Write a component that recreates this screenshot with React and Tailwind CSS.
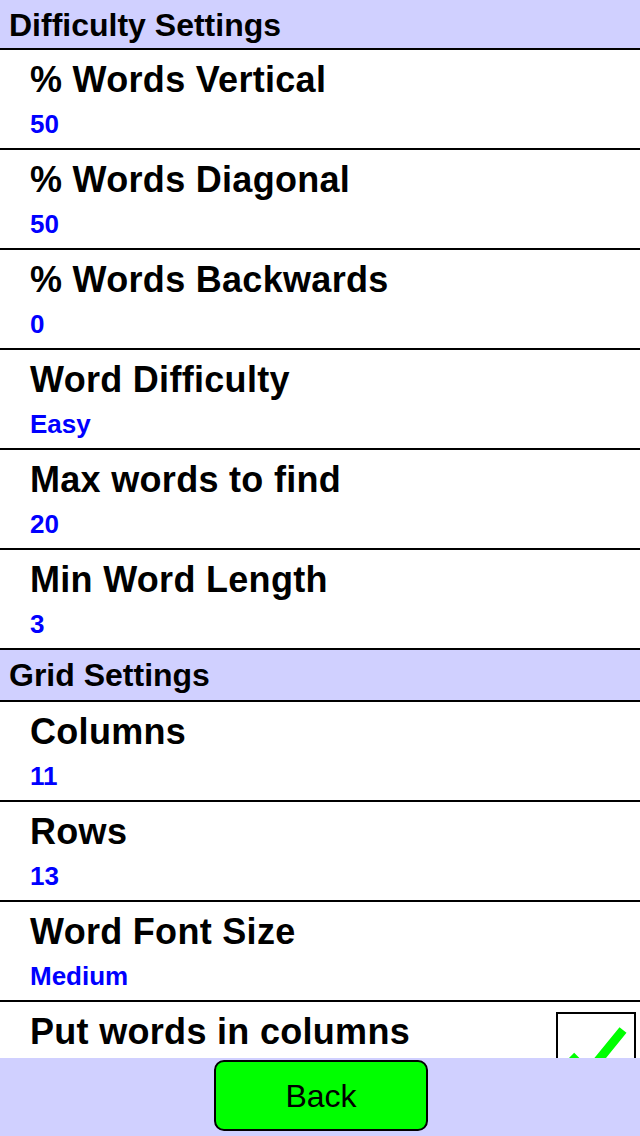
import { Fragment } from 'react';

const sections = [
  {
    title: 'Difficulty Settings',
    headerClass: 'h-[50px]',
    rows: [
      { label: '% Words Vertical', value: '50' },
      { label: '% Words Diagonal', value: '50' },
      { label: '% Words Backwards', value: '0' },
      { label: 'Word Difficulty', value: 'Easy' },
      { label: 'Max words to find', value: '20' },
      { label: 'Min Word Length', value: '3' },
    ],
  },
  {
    title: 'Grid Settings',
    headerClass: 'h-[52px]',
    rows: [
      { label: 'Columns', value: '11' },
      { label: 'Rows', value: '13' },
      { label: 'Word Font Size', value: 'Medium' },
      { label: 'Put words in columns', checkbox: true, checked: true },
    ],
  },
];

function CheckBox({ checked }) {
  return (
    <div className="w-[80px] h-[80px] shrink-0 border-2 border-black bg-white mt-[10px] mr-[4px]">
      {checked && (
        <svg width="76" height="76" viewBox="0 0 76 76">
          <path d="M13 42 L30 59 L65 16" fill="none" stroke="#00ff00" strokeWidth="9" />
        </svg>
      )}
    </div>
  );
}

function SettingRow({ row }) {
  return (
    <div className="h-[100px] shrink-0 border-b-2 border-black bg-white flex items-start justify-between">
      <div className="pl-[30px] pt-[12px]">
        <p className="text-[36px] leading-[36px] font-bold tracking-[0.3px] text-black">{row.label}</p>
        {row.value && (
          <p className="text-[26px] leading-[26px] font-bold text-[#0000ff] mt-[13px]">{row.value}</p>
        )}
      </div>
      {row.checkbox && <CheckBox checked={row.checked} />}
    </div>
  );
}

export default function App() {
  return (
    <div
      className="w-[640px] h-[1136px] flex flex-col bg-white overflow-hidden"
      style={{ fontFamily: "'Liberation Sans', Arial, sans-serif" }}
    >
      {/* settings list */}
      <div className="flex-1 overflow-hidden flex flex-col">
        {sections.map((s) => (
          <Fragment key={s.title}>
            <div className={`${s.headerClass} shrink-0 bg-[#d0d0ff] border-b-2 border-black pl-[9px] pt-[9px]`}>
              <p className="text-[32px] leading-[32px] font-bold text-black">{s.title}</p>
            </div>
            {s.rows.map((r) => (
              <SettingRow key={r.label} row={r} />
            ))}
          </Fragment>
        ))}
      </div>

      {/* bottom bar */}
      <div className="h-[78px] shrink-0 bg-[#d0d0ff] flex justify-center pt-[2px] pl-[2px]">
        <button className="w-[214px] h-[71px] bg-[#00ff00] border-2 border-black rounded-[10px] text-[32px] text-black">
          Back
        </button>
      </div>
    </div>
  );
}
